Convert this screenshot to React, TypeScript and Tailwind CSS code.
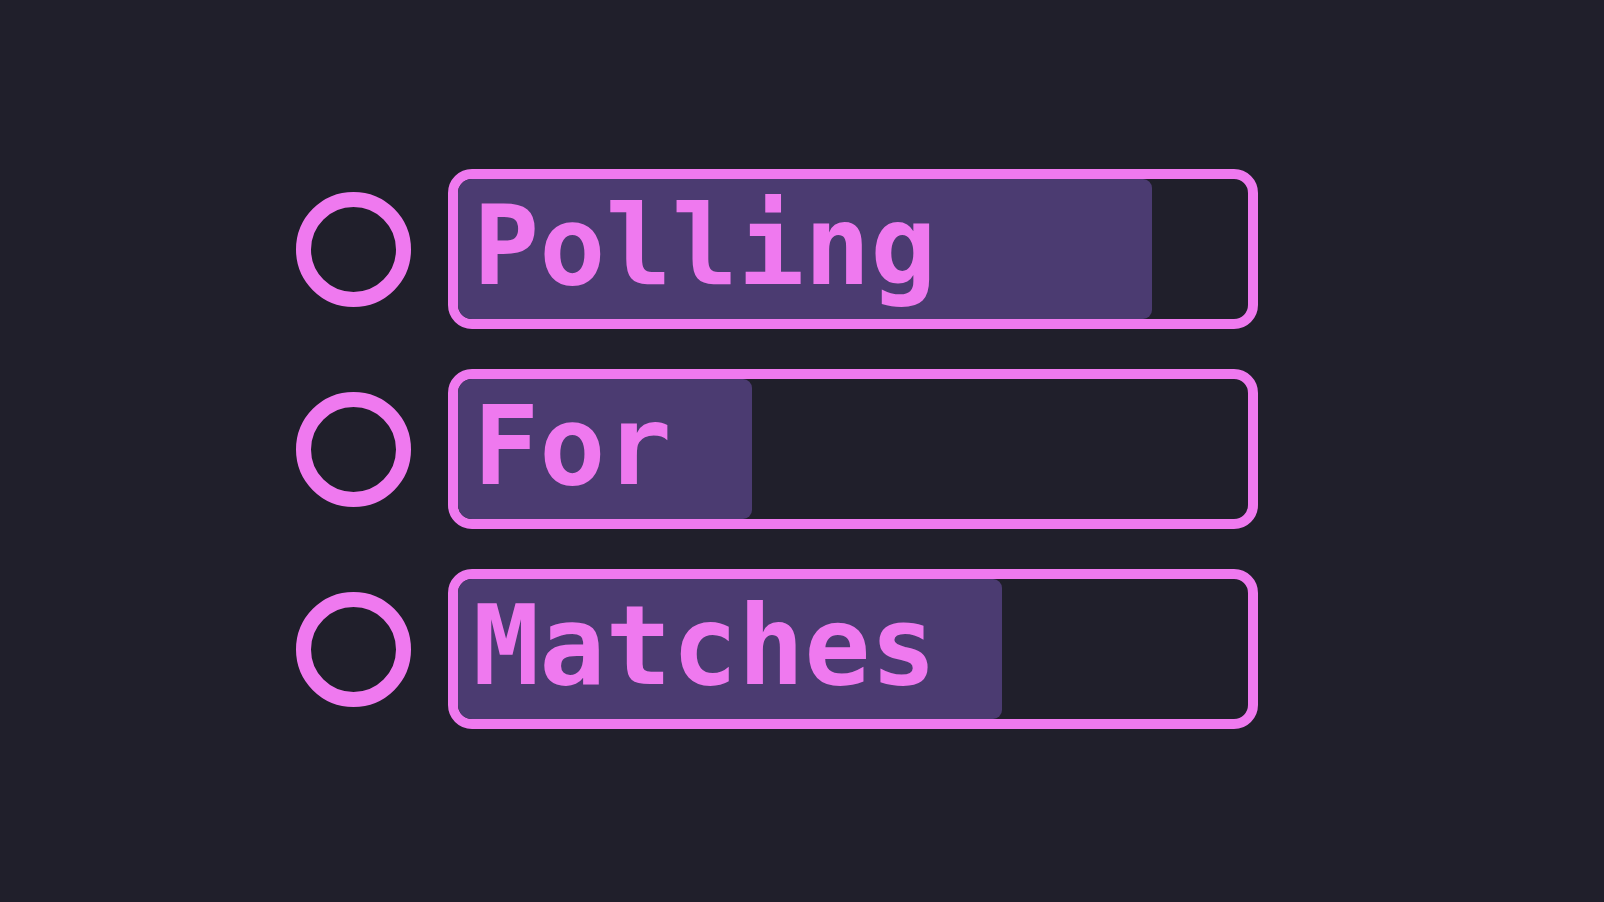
const rows = [
  { label: "Polling", fill: 694 },
  { label: "For", fill: 294 },
  { label: "Matches", fill: 544 },
]

function Row({ label, fill }: { label: string; fill: number }) {
  return (
    <div className="flex items-center gap-[37px]">
      <div className="w-[115px] h-[115px] rounded-full border-[15px] border-[#ef79ef] shrink-0" />
      <div className="relative w-[810px] h-[160px] border-[10px] border-[#ef79ef] rounded-[24px] overflow-hidden">
        <div className="absolute left-0 top-0 bottom-0 bg-[#4b3b71] rounded-[9px]" style={{ width: fill }} />
        <div className="relative h-full flex items-center pl-[15px] pb-[6px] text-[110px] font-bold leading-none text-[#ef79ef] font-['DejaVu_Sans_Mono',monospace]">
          {label}
        </div>
      </div>
    </div>
  )
}

export default function App() {
  return (
    <div className="w-[1604px] h-[902px] bg-[#201f2b] pl-[296px] pt-[169px] flex flex-col gap-10">
      {rows.map((r) => (
        <Row key={r.label} {...r} />
      ))}
    </div>
  )
}
